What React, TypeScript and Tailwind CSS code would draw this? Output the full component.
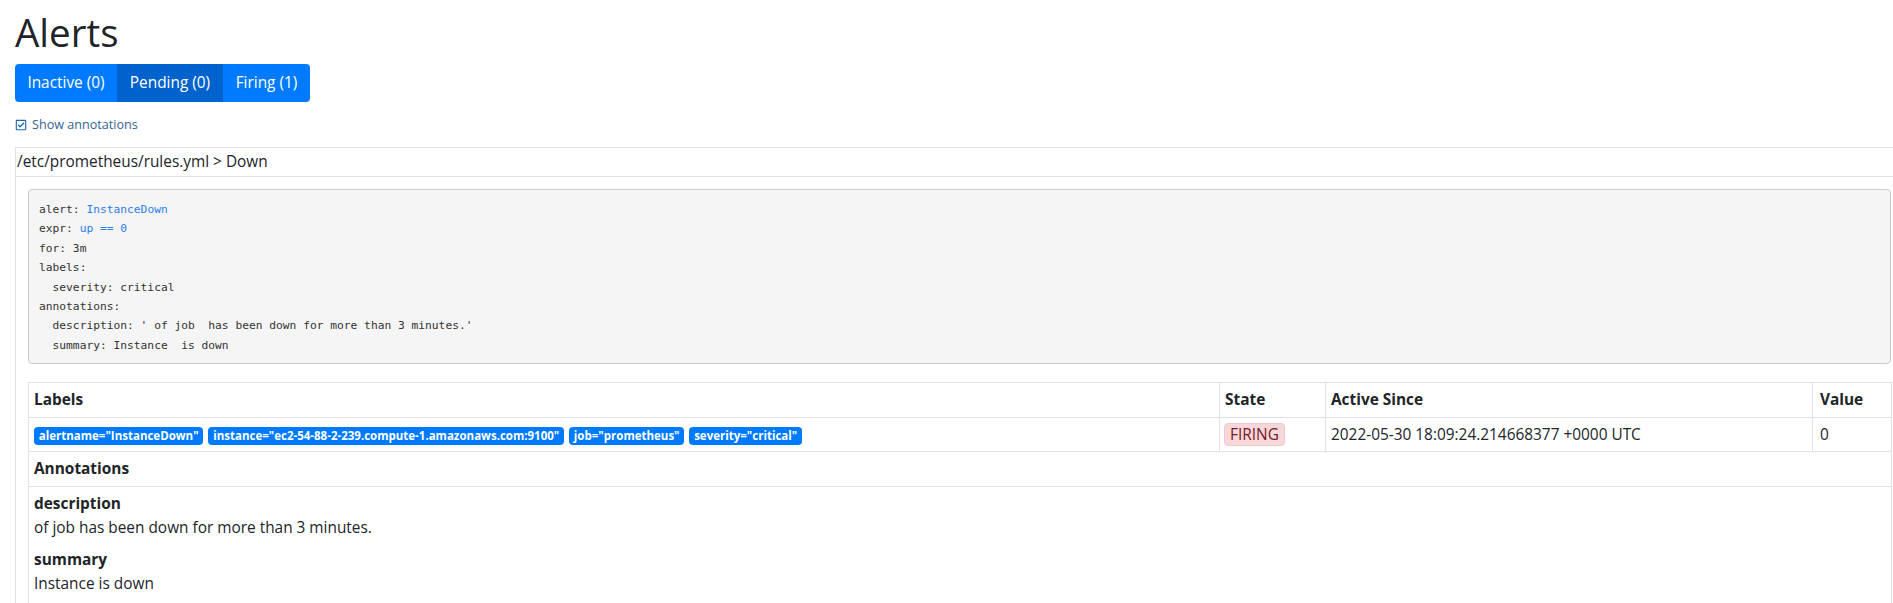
import { FaRegCheckSquare } from "react-icons/fa";

const labels = [
  'alertname="InstanceDown"',
  'instance="ec2-54-88-2-239.compute-1.amazonaws.com:9100"',
  'job="prometheus"',
  'severity="critical"',
];

export default function App() {
  return (
    <div className="w-[1893px] h-[603px] overflow-hidden bg-white text-[#212529] font-[family-name:'Open_Sans',sans-serif] pl-[15px]">
      <h1 className="text-[38.5px] leading-[48px] font-normal pt-[8px] mb-[8px]">Alerts</h1>
      <div className="inline-flex rounded-[4px] overflow-hidden text-white text-[15.4px] leading-[24px]">
        <button className="h-[38px] w-[102px] bg-[#007bff]">Inactive (0)</button>
        <button className="h-[38px] w-[106px] bg-[#0062cc]">Pending (0)</button>
        <button className="h-[38px] w-[87px] bg-[#007bff]">Firing (1)</button>
      </div>
      <div className="mt-[13px] mb-[12px] flex items-center gap-[5px] h-[20px] text-[12.6px] text-[#35648f]">
        <FaRegCheckSquare className="w-[12px] h-[12px] text-[#1f67ad]" />
        <span>Show annotations</span>
      </div>
      <div className="w-[1889px] border border-[#dee2e6]">
        <div className="pl-[1px] pt-[2px] pb-[2px] text-[15.4px] leading-[24px] border-b border-[#dee2e6]">
          /etc/prometheus/rules.yml &gt; Down
        </div>
        <div className="px-[12px] pt-[12px]">
          <pre className="bg-[#f5f5f5] border border-[#cccccc] rounded-[4px] pt-[10px] pb-[8px] px-[10px] text-[#333333] text-[11.25px] leading-[19.4px] font-[family-name:'DejaVu_Sans_Mono',monospace] mb-[18px]">
            <div>alert: <span className="text-[#2b7de9]">InstanceDown</span></div>
            <div>expr: <span className="text-[#2b7de9]">up == 0</span></div>
            <div>for: 3m</div>
            <div>labels:</div>
            <div>{"  severity: critical"}</div>
            <div>annotations:</div>
            <div>{"  description: ' of job  has been down for more than 3 minutes.'"}</div>
            <div>{"  summary: Instance  is down"}</div>
          </pre>
          <table className="w-full border-collapse table-fixed text-[15.4px] leading-[24px]">
            <colgroup>
              <col className="w-[1191px]" />
              <col className="w-[106px]" />
              <col className="w-[487px]" />
              <col className="w-[79px]" />
            </colgroup>
            <thead>
              <tr>
                <th className="border border-[#dee2e6] px-[5px] py-[4.8px] text-left font-bold">Labels</th>
                <th className="border border-[#dee2e6] px-[5px] py-[4.8px] text-left font-bold">State</th>
                <th className="border border-[#dee2e6] px-[5px] py-[4.8px] text-left font-bold">Active Since</th>
                <th className="border border-[#dee2e6] px-[7px] py-[4.8px] text-left font-bold">Value</th>
              </tr>
            </thead>
            <tbody>
              <tr>
                <td className="border border-[#dee2e6] px-[5px] py-[4.8px] whitespace-nowrap">
                  {labels.map((l) => (
                    <span
                      key={l}
                      className="inline-block bg-[#007bff] text-white text-[11.5px] font-bold leading-[12px] px-[4.8px] py-[3px] rounded-[4px] mr-[5px]"
                    >
                      {l}
                    </span>
                  ))}
                </td>
                <td className="border border-[#dee2e6] px-[4px] py-[4.8px]">
                  <span className="inline-block align-top bg-[#f8d7da] border border-[#f5c6cb] text-[#721c24] rounded-[4px] px-[5px] leading-[21px]">
                    FIRING
                  </span>
                </td>
                <td className="border border-[#dee2e6] px-[5px] py-[4.8px] whitespace-nowrap">
                  2022-05-30 18:09:24.214668377 +0000 UTC
                </td>
                <td className="border border-[#dee2e6] px-[7px] py-[4.8px]">0</td>
              </tr>
              <tr>
                <td colSpan={4} className="border border-[#dee2e6] px-[5px] py-[4.8px] font-bold">
                  Annotations
                </td>
              </tr>
              <tr>
                <td colSpan={4} className="border border-[#dee2e6] px-[5px] pt-[4.8px] pb-[30px]">
                  <div className="mb-[8px]">
                    <div className="font-bold">description</div>
                    <div>of job has been down for more than 3 minutes.</div>
                  </div>
                  <div className="mb-[8px]">
                    <div className="font-bold">summary</div>
                    <div>Instance is down</div>
                  </div>
                </td>
              </tr>
            </tbody>
          </table>
        </div>
      </div>
    </div>
  );
}
